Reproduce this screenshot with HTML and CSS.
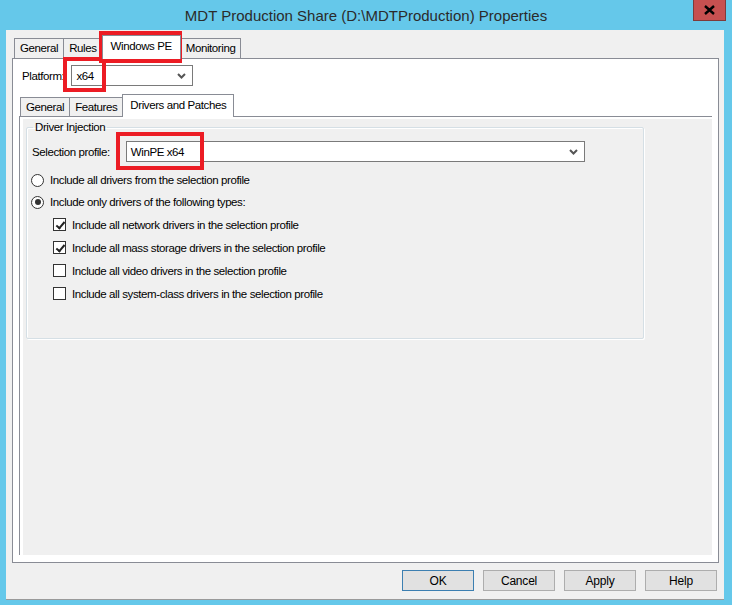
FILE: index.html
```html
<!DOCTYPE html>
<html>
<head>
  <title>MDT Production Share (D:\MDTProduction) Properties</title>
  <link rel="stylesheet" href="styles.css">
</head>
<body>
  <div class="window">
    <div class="titlebar">
      <span class="title">MDT Production Share (D:\MDTProduction) Properties</span>
      <button class="close-button">
        <svg width="11" height="10" viewBox="0 0 11 10">
          <path d="M1 1L10 9M10 1L1 9" stroke="#000" stroke-width="2.4" fill="none"/>
        </svg>
      </button>
    </div>
    <div class="client">
      <div class="tabstrip">
        <div class="tab">General</div>
        <div class="tab">Rules</div>
        <div class="tab active">Windows PE</div>
        <div class="tab">Monitoring</div>
      </div>
      <div class="tabpage">
        <div class="platform-row">
          <label>Platform:</label>
          <div class="combo platform-combo">
            <span>x64</span>
            <svg class="chevron" width="9" height="6" viewBox="0 0 9 6">
              <path d="M1 1L4.5 4.5L8 1" stroke="#555" stroke-width="2" fill="none"/>
            </svg>
          </div>
        </div>
        <div class="tabstrip inner">
          <div class="tab">General</div>
          <div class="tab">Features</div>
          <div class="tab active">Drivers and Patches</div>
        </div>
        <div class="inner-page">
          <div class="panel">
            <fieldset class="group">
              <legend>Driver Injection</legend>
              <div class="profile-row">
                <label>Selection profile:</label>
                <div class="combo profile-combo">
                  <span>WinPE x64</span>
                  <svg class="chevron" width="9" height="6" viewBox="0 0 9 6">
                    <path d="M1 1L4.5 4.5L8 1" stroke="#555" stroke-width="2" fill="none"/>
                  </svg>
                </div>
              </div>
              <label class="option"><input type="radio" name="drivers"> Include all drivers from the selection profile</label>
              <label class="option"><input type="radio" name="drivers" checked> Include only drivers of the following types:</label>
              <div class="types">
                <label class="option"><input type="checkbox" checked> Include all network drivers in the selection profile</label>
                <label class="option"><input type="checkbox" checked> Include all mass storage drivers in the selection profile</label>
                <label class="option"><input type="checkbox"> Include all video drivers in the selection profile</label>
                <label class="option"><input type="checkbox"> Include all system-class drivers in the selection profile</label>
              </div>
            </fieldset>
          </div>
        </div>
      </div>
      <div class="buttons">
        <button class="default">OK</button>
        <button>Cancel</button>
        <button>Apply</button>
        <button>Help</button>
      </div>
    </div>

    <!-- red call-out frames drawn over the dialog -->
    <div class="callout callout-tab"></div>
    <div class="callout callout-platform"></div>
    <div class="callout callout-profile"></div>
  </div>
</body>
</html>
```

FILE: styles.css
```css
body {
  margin: 0;
  background-color: #65c8ea;
  font-family: "Liberation Sans", Arial, sans-serif;
  font-size: 11.5px;
  letter-spacing: -0.4px;
  color: #000;
}
.window {
  position: relative;
  width: 732px;
  height: 605px;
  display: flex;
  flex-direction: column;
}
.titlebar {
  height: 30px;
  position: relative;
  display: flex;
  align-items: center;
  justify-content: center;
}
.title {
  font-size: 15px;
  letter-spacing: 0;
  color: #2b2b2b;
}
.close-button {
  position: absolute;
  top: 0;
  right: 6px;
  width: 33px;
  height: 21px;
  padding: 0;
  background-color: #c75050;
  border: 1px solid #7f3a3a;
  border-top: none;
  display: flex;
  align-items: center;
  justify-content: center;
}

/* dialog client area */
.client {
  height: 570px;
  margin: 0 8px 0 6px;
  padding-top: 8px;
  box-sizing: border-box;
  background-color: #f0f0f0;
  border-bottom: 1px solid #9a9a9a;
}
.tabstrip {
  display: flex;
  align-items: flex-end;
  height: 20px;
  margin-left: 8px;
}
.tab {
  height: 20px;
  box-sizing: border-box;
  padding: 0 5px;
  line-height: 19px;
  background-color: #f0f0f0;
  border: 1px solid #898c95;
  border-bottom: none;
  margin-right: -1px;
}
.tab.active {
  position: relative;
  z-index: 1;
  height: 24px;
  margin-bottom: -1px;
  padding: 0 8px;
  background-color: #fff;
  line-height: 21px;
}
.tabpage {
  height: 505px;
  box-sizing: border-box;
  margin: 0 5px 0 6px;
  background-color: #fff;
  border: 1px solid #898c95;
}
.platform-row {
  display: flex;
  align-items: center;
  margin: 6px 0 0 9px;
  gap: 7px;
}

/* drop-down boxes */
.combo {
  height: 21px;
  box-sizing: border-box;
  border: 1px solid #7a7a7a;
  background-color: #fff;
  display: flex;
  align-items: center;
  justify-content: space-between;
  padding: 0 6px 0 4px;
}
.platform-combo {
  width: 122px;
}
.profile-combo {
  width: 459px;
}
.chevron {
  display: block;
}

.tabstrip.inner {
  height: 19px;
  margin: 11px 0 0 7px;
}
.tabstrip.inner .tab {
  height: 19px;
  line-height: 18px;
}
.tabstrip.inner .tab.active {
  height: 23px;
  line-height: 21px;
  padding: 0 7px;
}
.inner-page {
  height: 439px;
  box-sizing: border-box;
  margin: 0 6px;
  padding: 2px 0 0 3px;
  border-top: 1px solid #898c95;
  border-left: 1px solid #898c95;
}
.panel {
  height: 100%;
  padding: 1px 0 0 3px;
  box-sizing: border-box;
  background-color: #f0f0f0;
}
.group {
  width: 618px;
  box-sizing: border-box;
  margin: 0;
  padding: 7px 5px 33px 5px;
  border: 1px solid #d5dfe5;
  border-radius: 2px;
  box-shadow: 1px 1px 0 #fff, inset 1px 1px 0 #fff;
}
.group legend {
  margin-left: 1px;
  padding: 0 2px;
  line-height: 14px;
}
.profile-row {
  display: flex;
  align-items: center;
  gap: 16px;
  margin-bottom: 7px;
}
.option {
  display: flex;
  align-items: center;
  height: 22px;
  margin-left: -1px;
}
.types {
  padding-left: 22px;
}
.types .option {
  height: 23px;
}

/* radio buttons and check boxes */
.option input {
  appearance: none;
  -webkit-appearance: none;
  position: relative;
  margin: 0 6px 0 0;
  background-color: #fff;
  border: 1px solid #333;
  flex-shrink: 0;
}
.option input[type="radio"] {
  width: 13px;
  height: 13px;
  border-radius: 50%;
}
.option input[type="radio"]:checked::after {
  content: "";
  position: absolute;
  left: 2.5px;
  top: 2.5px;
  width: 6px;
  height: 6px;
  border-radius: 50%;
  background-color: #333;
}
.option input[type="checkbox"] {
  width: 13px;
  height: 13px;
}
.option input[type="checkbox"]:checked::after {
  content: "";
  position: absolute;
  left: 3.5px;
  top: 0.5px;
  width: 3px;
  height: 7px;
  border-right: 2.5px solid #222;
  border-bottom: 2.5px solid #222;
  transform: rotate(40deg);
}

.buttons {
  display: flex;
  justify-content: flex-end;
  gap: 9px;
  margin: 7px 7px 0 0;
}
.buttons button {
  width: 72px;
  height: 21px;
  padding: 0;
  font-family: inherit;
  font-size: 12px;
  letter-spacing: -0.2px;
  color: #000;
  background-color: #e1e1e1;
  border: 1px solid #adadad;
}
.buttons button.default {
  border-color: #3c7fb1;
}

/* red call-out frames */
.callout {
  position: absolute;
  border: 4px solid #ec1c24;
  box-sizing: border-box;
}
.callout-tab {
  left: 99px;
  top: 31px;
  width: 83px;
  height: 32px;
}
.callout-platform {
  left: 63px;
  top: 57px;
  width: 43px;
  height: 35px;
}
.callout-profile {
  left: 116px;
  top: 132px;
  width: 88px;
  height: 38px;
}
```
